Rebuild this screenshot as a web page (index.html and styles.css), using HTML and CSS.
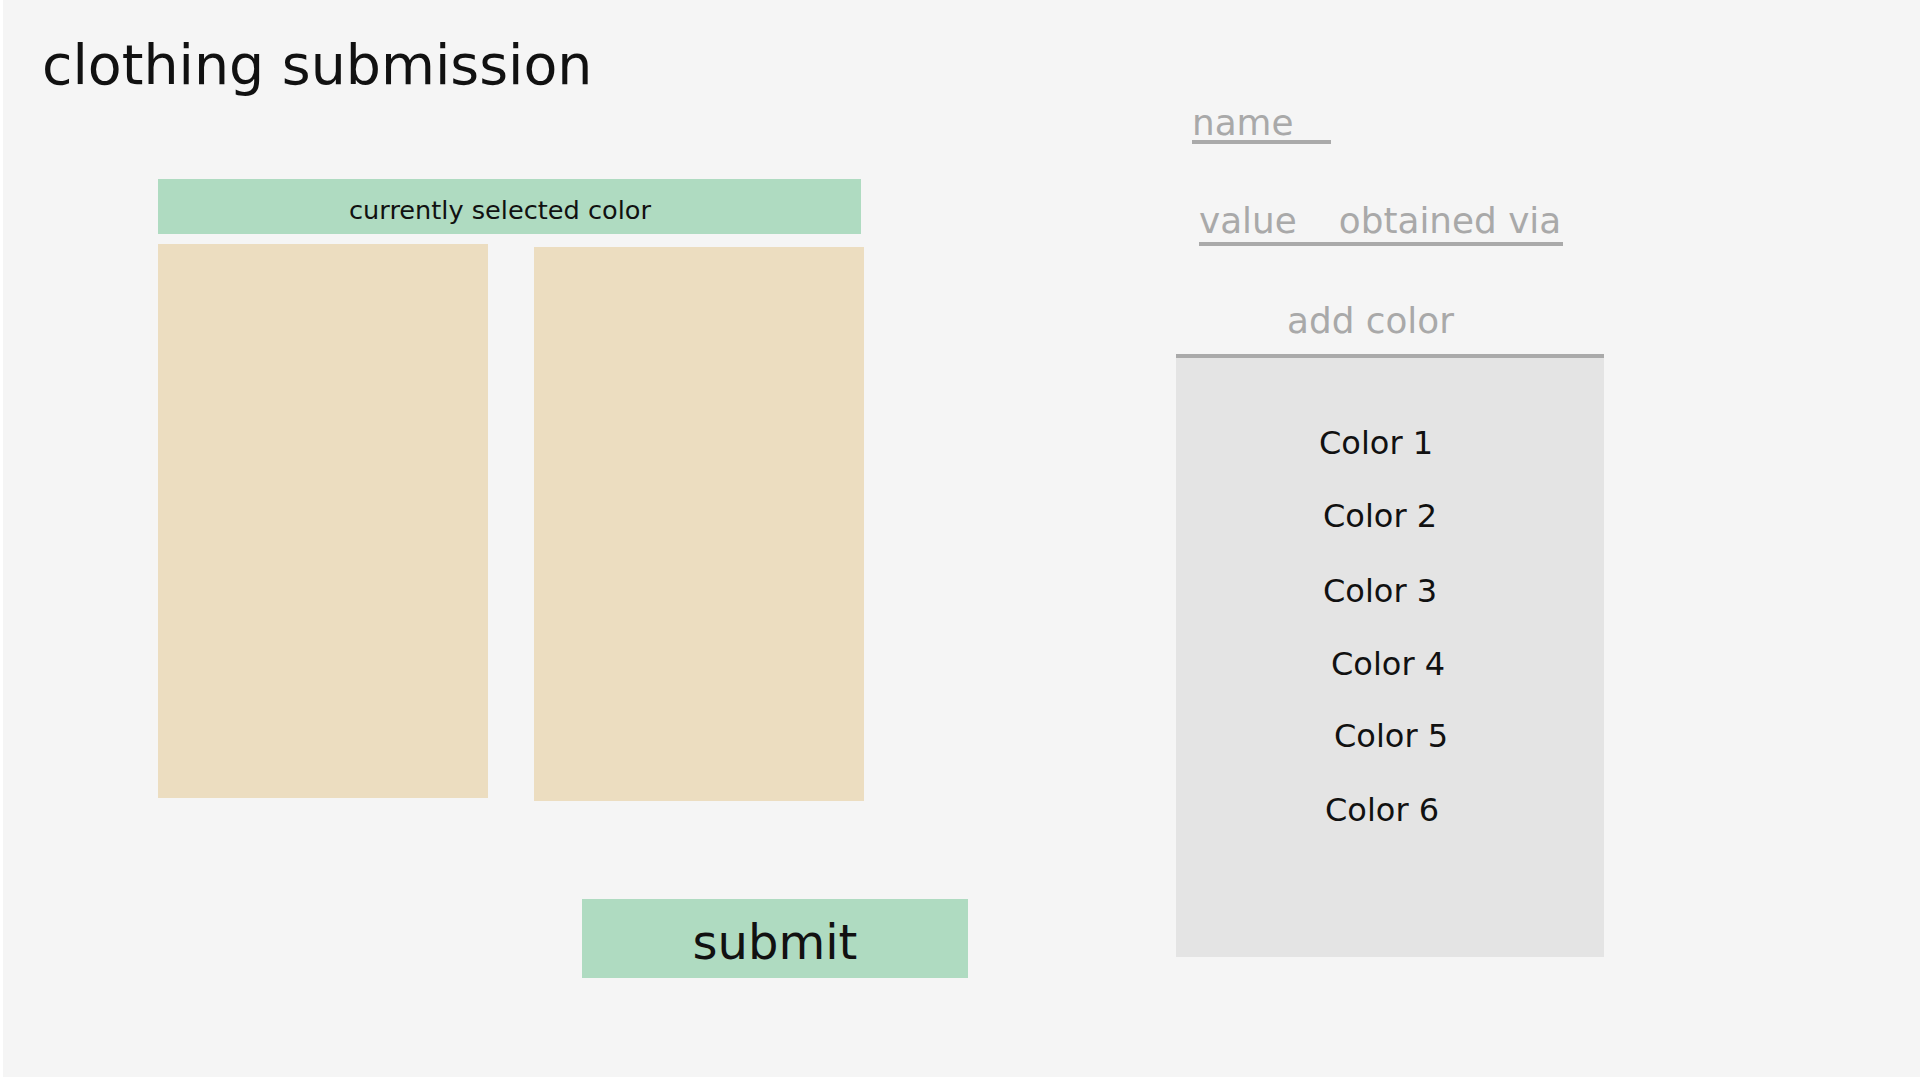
FILE: index.html
```html
<!DOCTYPE html>
<html lang="en">
<head>
<meta charset="utf-8">
<title>clothing submission</title>
<link rel="stylesheet" href="styles.css">
</head>
<body>
<div class="frame">
  <div class="left-col">
    <h1 class="title">clothing submission</h1>
    <div class="palette">
      <div class="selected-bar">currently selected color</div>
      <div class="swatches">
        <div class="swatch"></div>
        <div class="swatch swatch-offset"></div>
      </div>
      <button class="submit" type="button">submit</button>
    </div>
  </div>
  <div class="right-col">
    <div class="field field-name">name</div>
    <div class="field field-value"><span>value</span><span>obtained via</span></div>
    <div class="add-color">add color</div>
    <ul class="color-list">
      <li class="color-item">Color 1</li>
      <li class="color-item">Color 2</li>
      <li class="color-item">Color 3</li>
      <li class="color-item">Color 4</li>
      <li class="color-item">Color 5</li>
      <li class="color-item">Color 6</li>
    </ul>
  </div>
</div>
</body>
</html>
```
FILE: styles.css
```css
html, body {
  margin: 0;
  padding: 0;
  background: #ffffff;
}

body {
  font-family: "DejaVu Sans", "Liberation Sans", sans-serif;
  color: #111111;
}

.frame {
  margin-left: 3px;
  width: 1917px;
  height: 1077px;
  background: #f5f5f5;
  display: flex;
  flex-direction: row;
  overflow: hidden;
}

.left-col {
  width: 1173px;
  flex: none;
  display: flex;
  flex-direction: column;
}

.title {
  margin: 0;
  padding-top: 33px;
  margin-left: 39px;
  font-size: 55.4px;
  line-height: 64px;
  font-weight: normal;
  color: #111111;
}

.palette {
  margin-top: 82px;
  margin-left: 155px;
  display: flex;
  flex-direction: column;
  align-items: flex-start;
}

.selected-bar {
  width: 684px;
  height: 47px;
  padding-top: 8px;
  padding-right: 19px;
  box-sizing: content-box;
  background: #afdbc1;
  font-size: 25.6px;
  line-height: 47px;
  text-align: center;
  color: #111111;
}

.swatches {
  margin-top: 10px;
  display: flex;
  align-items: flex-start;
  gap: 46px;
}

.swatch {
  width: 330px;
  height: 554px;
  background: #ecddc0;
}

.swatch-offset {
  margin-top: 3px;
}

.submit {
  margin-top: 98px;
  margin-left: 424px;
  width: 386px;
  height: 79px;
  padding: 8px 0 0 0;
  border: none;
  background: #afdbc1;
  font-family: "DejaVu Sans", "Liberation Sans", sans-serif;
  font-size: 48px;
  line-height: 71px;
  color: #111111;
  text-align: center;
  display: block;
  box-sizing: border-box;
}

.right-col {
  flex: none;
  width: 428px;
  display: flex;
  flex-direction: column;
  align-items: flex-start;
  padding-top: 106px;
}

.field {
  font-size: 35.8px;
  color: #a9a9a9;
  border-bottom: 4px solid #aaaaaa;
}

.field-name {
  margin-left: 16px;
  width: 139px;
  line-height: 34px;
}

.field-value {
  margin-top: 59px;
  margin-left: 23px;
  width: 364px;
  line-height: 35px;
  padding-bottom: 4px;
  display: flex;
  gap: 42px;
}

.add-color {
  margin-top: 57px;
  margin-left: 111px;
  font-size: 35.8px;
  line-height: 35px;
  color: #a9a9a9;
}

.color-list {
  list-style: none;
  margin: 16px 0 0 0;
  padding: 49px 0 0 143px;
  width: 428px;
  height: 603px;
  box-sizing: border-box;
  border-top: 4px solid #aaaaaa;
  background: #e4e4e4;
  display: flex;
  flex-direction: column;
  align-items: flex-start;
}

.color-item {
  font-size: 32px;
  line-height: 73px;
  color: #111111;
}

.color-item:nth-child(2) {
  margin-left: 4px;
}

.color-item:nth-child(3) {
  margin-left: 4px;
  margin-top: 2px;
}

.color-item:nth-child(4) {
  margin-left: 12px;
}

.color-item:nth-child(5) {
  margin-left: 15px;
  margin-top: -1px;
}

.color-item:nth-child(6) {
  margin-left: 6px;
  margin-top: 1px;
}
```
